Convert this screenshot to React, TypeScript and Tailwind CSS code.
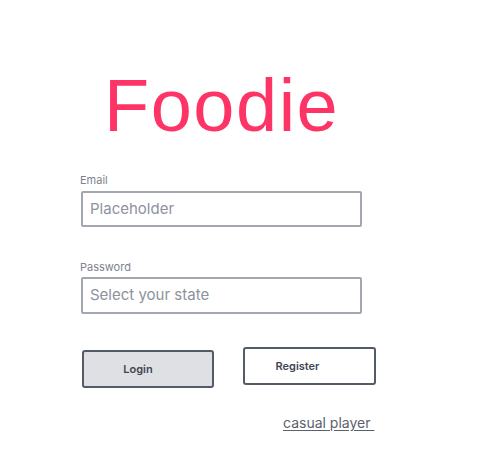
import React from 'react';

const App: React.FC = () => {
  return (
    <div className="w-[484px] h-[460px] bg-white font-['Inter','Liberation_Sans',sans-serif]">
      <div className="pt-[69px] pl-[104px]">
        <h1 className="font-['Liberation_Sans',Arial,sans-serif] text-[74px] leading-[74px] tracking-[1.5px] text-[#ff3466]">
          Foodie
        </h1>
      </div>

      <div className="pl-[80px] flex flex-col">
        {/* Email */}
        <label className="mt-[31px] text-[11px] leading-[13px] text-[#7d838e]">Email</label>
        <div className="mt-[4px] ml-[1px] w-[281px] h-[36px] border-2 border-[#a2a7b0] rounded-[2px] flex items-center px-[7px]">
          <span className="text-[15px] text-[#8d929c]">Placeholder</span>
        </div>

        {/* Password */}
        <label className="mt-[34px] text-[11px] leading-[13px] text-[#7d838e]">Password</label>
        <div className="mt-[3px] ml-[1px] w-[281px] h-[37px] border-2 border-[#a2a7b0] rounded-[2px] flex items-center px-[7px]">
          <span className="text-[15px] text-[#8d929c]">Select your state</span>
        </div>

        {/* Buttons */}
        <div className="mt-[33px] flex items-start">
          <button className="mt-[3px] ml-[2px] w-[132px] h-[38px] bg-[#dfe0e4] border-2 border-[#535a68] rounded-[3px] pr-[20px] text-[11px] font-semibold text-[#3f4652]">
            Login
          </button>
          <button className="ml-[29px] w-[133px] h-[38px] bg-white border-2 border-[#535a68] rounded-[3px] pr-[24px] text-[11px] font-semibold text-[#3f4652]">
            Register
          </button>
        </div>

        <div className="mt-[22px] ml-[203px]">
          <a className="text-[14px] leading-[16px] text-[#5b616d] underline underline-offset-2">
            casual player&nbsp;
          </a>
        </div>
      </div>
    </div>
  );
};

export default App;
